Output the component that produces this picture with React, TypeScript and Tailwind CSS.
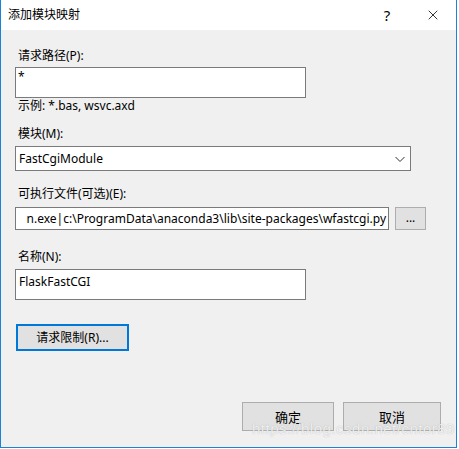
import { X } from 'lucide-react';

const font = { fontFamily: '"Noto Sans", "Noto Sans CJK SC", sans-serif' };

export default function App() {
  return (
    <div className="w-[459px] h-[449px] bg-white text-[12px] text-black" style={font}>
      <div className="w-[457px] h-[448px] border-x border-b border-[#1883d7] flex flex-col relative">
        {/* Title bar */}
        <div className="h-[30px] bg-white flex items-center pl-[7px] shrink-0">
          <div className="flex-1 leading-4">添加模块映射</div>
          <div className="w-[46px] flex justify-center text-[15px] leading-4">?</div>
          <div className="w-[46px] flex justify-center">
            <X className="w-[16px] h-[16px]" strokeWidth={1.2} />
          </div>
        </div>

        {/* Content */}
        <div className="flex-1 bg-[#f0f0f0] pl-[14px] flex flex-col leading-4">
          <div className="mt-[18px] pl-[3px]">请求路径(P):</div>
          <div className="mt-[3px] w-[291px] h-[31px] bg-white border border-[#7a7a7a] px-[2px] leading-[18px]">*</div>
          <div className="pl-[3px]">示例: *.bas, wsvc.axd</div>

          <div className="mt-[12px] pl-[3px]">模块(M):</div>
          <div className="mt-[4px] w-[396px] h-[25px] bg-white border border-[#7a7a7a] flex items-center pl-[3px] pr-[3px]">
            <span className="flex-1">FastCgiModule</span>
            <svg width="12" height="12" viewBox="0 0 12 12" className="mr-[1px]">
              <path d="M1.5 4 L6 8.5 L10.5 4" fill="none" stroke="#333" strokeWidth="1" />
            </svg>
          </div>

          <div className="mt-[15px] pl-[3px]">可执行文件(可选)(E):</div>
          <div className="mt-[5px] flex items-center gap-[6px]">
            <div className="w-[374px] h-[23px] bg-white border border-[#7a7a7a] flex items-center justify-end pr-[2px] overflow-hidden whitespace-nowrap">
              n.exe|c:\ProgramData\anaconda3\lib\site-packages\wfastcgi.py
            </div>
            <div className="w-[31px] h-[23px] bg-[#e1e1e1] border border-[#adadad] flex items-center justify-center leading-none pb-[2px]">
              ...
            </div>
          </div>

          <div className="mt-[19px] pl-[3px]">名称(N):</div>
          <div className="mt-[4px] w-[291px] h-[31px] bg-white border border-[#7a7a7a] px-[3px] leading-[24px]">FlaskFastCGI</div>

          <div className="mt-[24px] ml-[1px] w-[113px] h-[27px] bg-[#e1e1e1] border-2 border-[#0078d7] flex items-center justify-center">
            请求限制(R)...
          </div>

          <div className="flex-1" />
          <div className="flex justify-end gap-[9px] pr-[15px] pb-[16px]">
            <div className="w-[92px] h-[29px] bg-[#e1e1e1] border border-[#adadad] flex items-center justify-center text-[13px]">确定</div>
            <div className="w-[98px] h-[29px] bg-[#e1e1e1] border border-[#adadad] flex items-center justify-center text-[13px]">取消</div>
          </div>
        </div>

        {/* Watermark */}
        <div
          className="absolute left-[251px] top-[420px] text-[15px] leading-[17px] text-white/80 tracking-[0.5px] pointer-events-none"
          style={{ fontFamily: '"Liberation Sans", sans-serif', textShadow: '0 0 1px rgba(120,120,120,0.6)' }}
        >
          https://blog.csdn.net/cntor89
        </div>
      </div>
    </div>
  );
}
